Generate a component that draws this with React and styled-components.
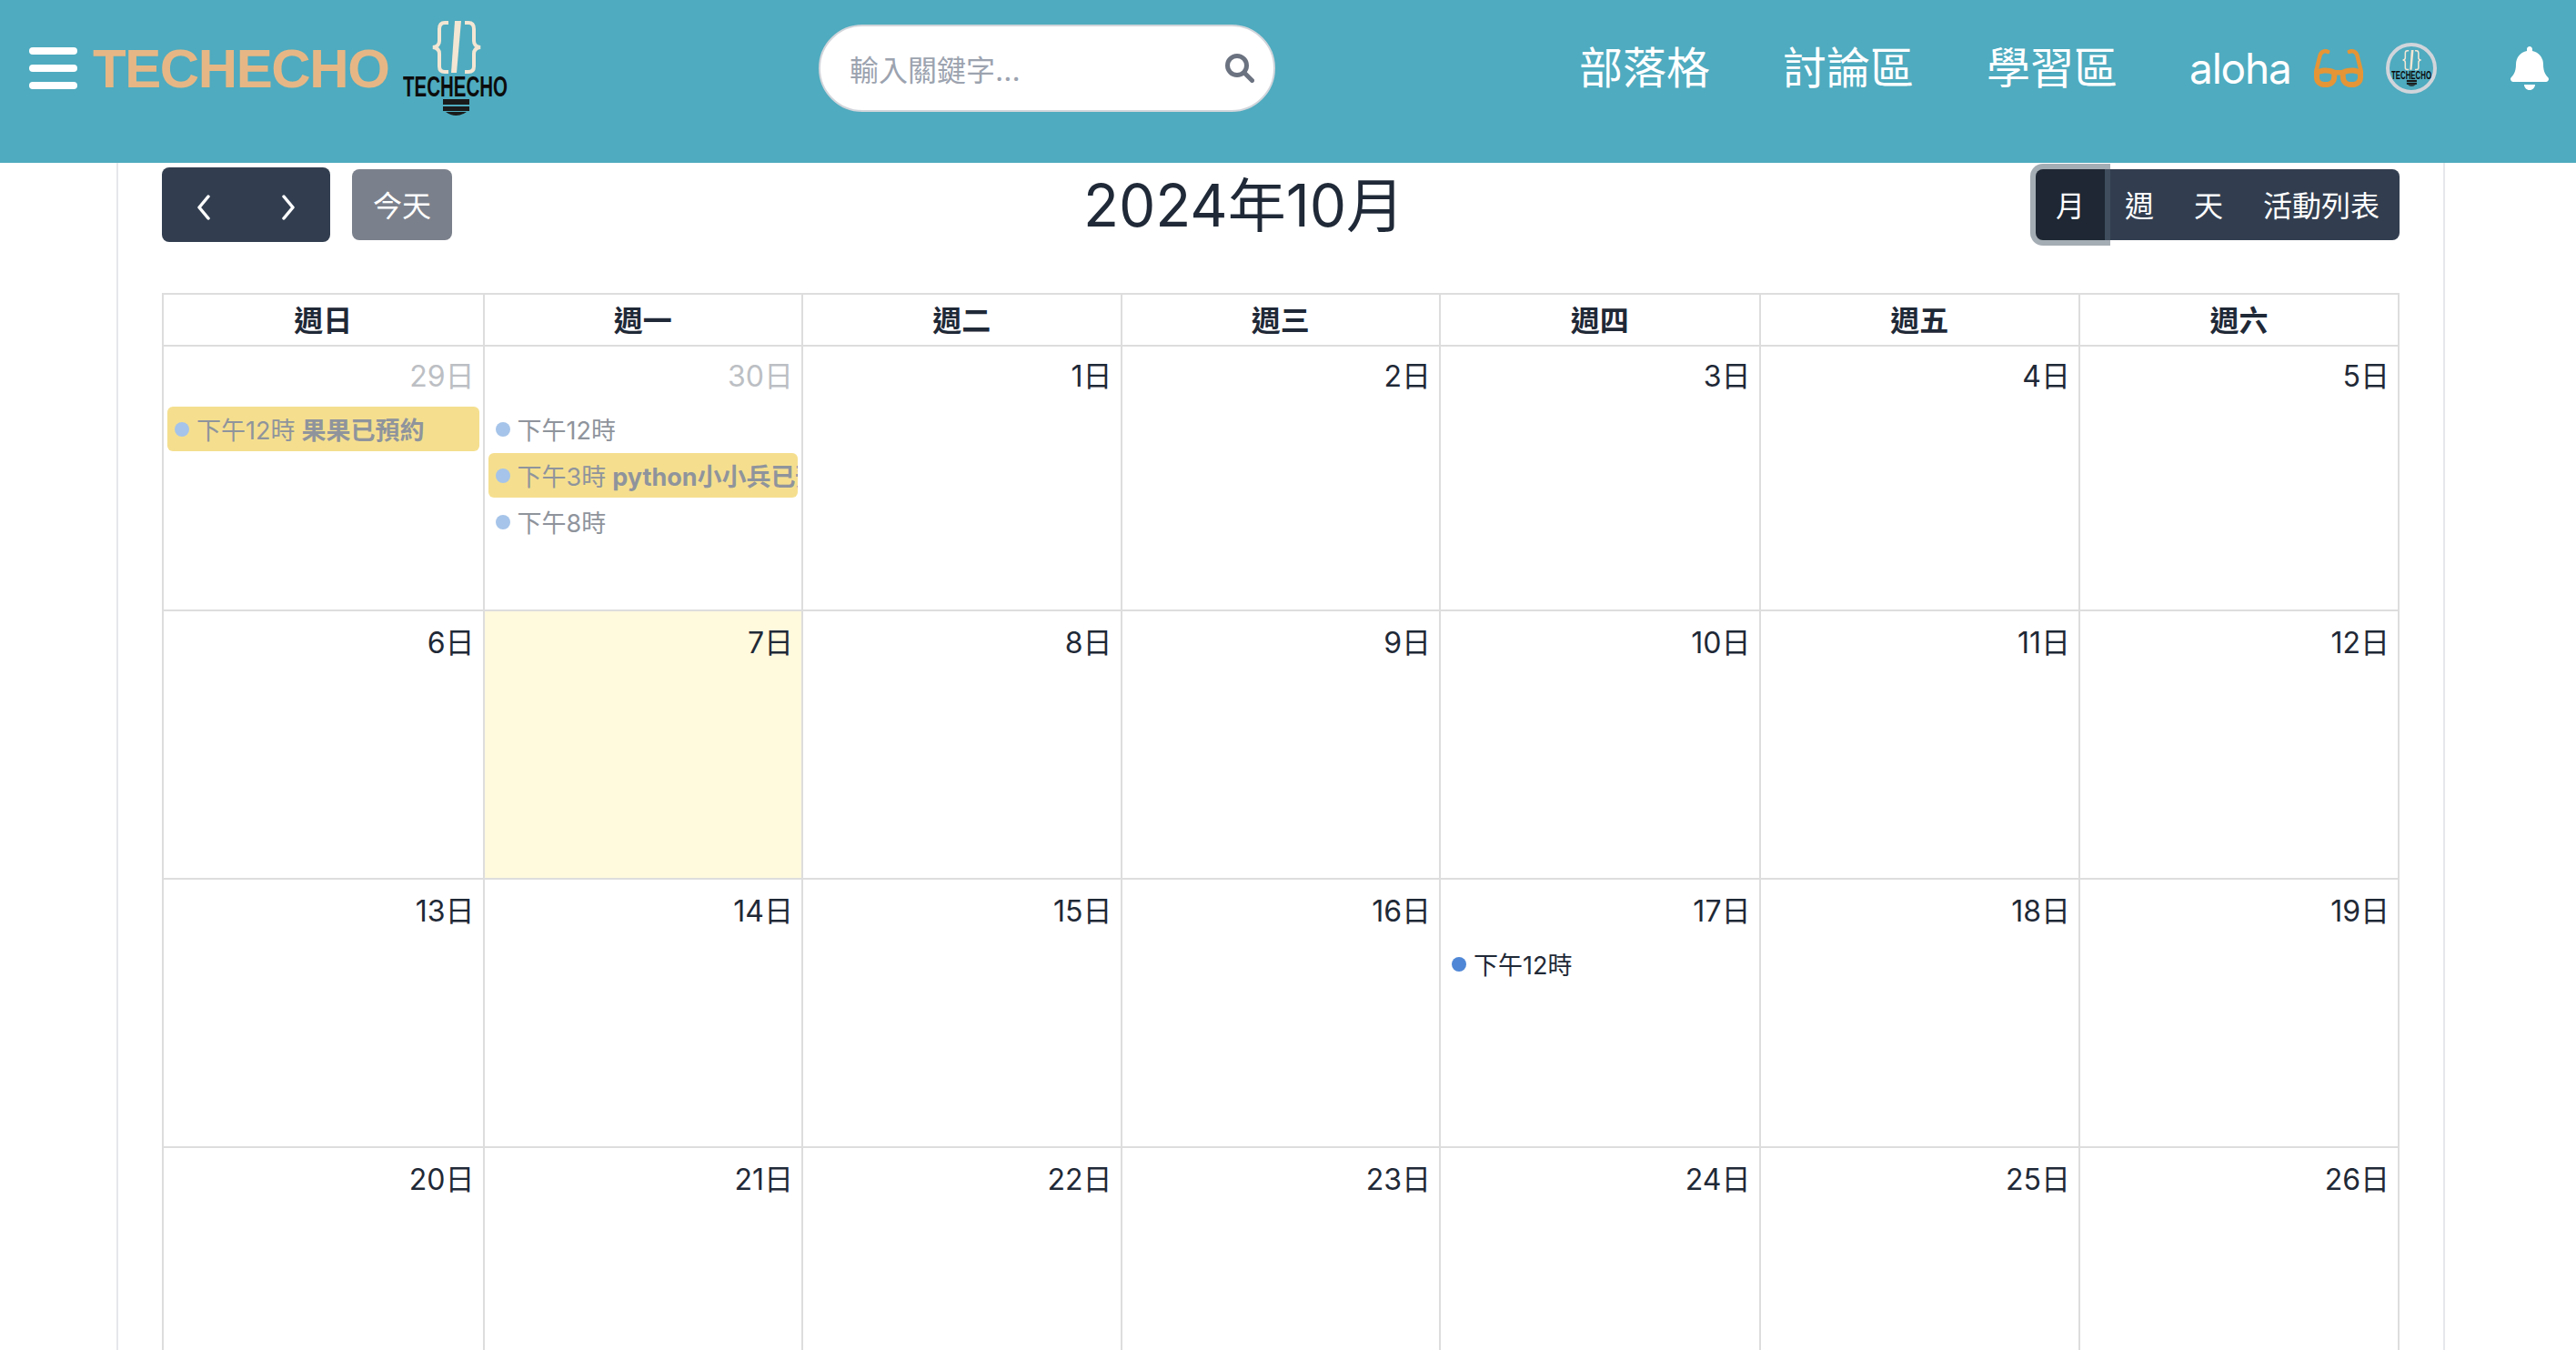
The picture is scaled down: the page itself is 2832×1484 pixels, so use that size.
import React from "react";
import styled, { createGlobalStyle } from "styled-components";
import { FaBell, FaGlasses } from "react-icons/fa";

const GlobalStyle = createGlobalStyle`
  html, body {
    margin: 0;
    padding: 0;
    height: 1484px;
    overflow: hidden;
    background: #fff;
    font-family: Inter, "Noto Sans CJK TC", sans-serif;
    color: #1f2937;
  }
`;

const weekdays = ["週日", "週一", "週二", "週三", "週四", "週五", "週六"];

// the cells of the calendar are not all equally wide in the picture
const columns = "352.5px 350.5px 350.5px 350.5px 351.5px 351.5px 351px";

const weeks = [
  {
    height: 291,
    head: 66,
    top: 11,
    days: [
      {
        label: "29日",
        other: true,
        events: [{ time: "下午12時", title: "果果已預約", booked: true }],
      },
      {
        label: "30日",
        other: true,
        events: [
          { time: "下午12時" },
          { time: "下午3時", title: "python小小兵已預約", booked: true },
          { time: "下午8時" },
        ],
      },
      { label: "1日" },
      { label: "2日" },
      { label: "3日" },
      { label: "4日" },
      { label: "5日" },
    ],
  },
  {
    height: 295,
    head: 68,
    top: 13,
    days: [
      { label: "6日" },
      { label: "7日", today: true },
      { label: "8日" },
      { label: "9日" },
      { label: "10日" },
      { label: "11日" },
      { label: "12日" },
    ],
  },
  {
    height: 295,
    head: 68,
    top: 13,
    days: [
      { label: "13日" },
      { label: "14日" },
      { label: "15日" },
      { label: "16日" },
      { label: "17日", events: [{ time: "下午12時" }] },
      { label: "18日" },
      { label: "19日" },
    ],
  },
  {
    height: 295,
    head: 68,
    top: 13,
    days: [
      { label: "20日" },
      { label: "21日" },
      { label: "22日" },
      { label: "23日" },
      { label: "24日" },
      { label: "25日" },
      { label: "26日" },
    ],
  },
];

const Logo = ({ width }) => (
  <LogoSvg width={width} viewBox="0 0 115 105">
    <g fill="none" stroke="#f3e6d3" strokeWidth="4">
      <path d="M50 2H46Q40 2 40 9V22Q40 28 33 29Q40 30 40 36V50Q40 56 46 56H50" />
      <path d="M68 2H72Q78 2 78 9V22Q78 28 85 29Q78 30 78 36V50Q78 56 72 56H68" />
    </g>
    <polygon points="57,0 64,0 59,57 53,57" fill="#f3e6d3" />
    <LogoText x="0" y="83" textLength="115" lengthAdjust="spacingAndGlyphs">
      TECHECHO
    </LogoText>
    <rect x="44" y="86" width="29" height="6" fill="#1a1a1a" />
    <rect x="44" y="94" width="29" height="5" fill="#1a1a1a" />
    <path d="M47 100H70Q58 108 47 100Z" fill="#1a1a1a" />
  </LogoSvg>
);

const Chevron = ({ d }) => (
  <ChevronSvg viewBox="0 0 16 28" fill="none" stroke="#fff" strokeWidth="3.5" strokeLinecap="round" strokeLinejoin="round">
    <path d={d} />
  </ChevronSvg>
);

const Event = ({ event, past }) => (
  <EventRow $booked={event.booked} $past={past}>
    <EventDot $past={past} />
    <span>{event.time}</span>
    {event.title && <EventTitle>{event.title}</EventTitle>}
  </EventRow>
);

const App = () => {
  return (
    <>
      <GlobalStyle />
      <Header>
        <MenuIcon viewBox="0 0 53 46">
          <rect y="0" width="53" height="8" rx="4" />
          <rect y="19" width="53" height="8" rx="4" />
          <rect y="38" width="53" height="8" rx="4" />
        </MenuIcon>
        <Brand>TECHECHO</Brand>
        <LogoSlot>
          <Logo width={115} />
        </LogoSlot>
        <SearchBox>
          <Placeholder>輸入關鍵字...</Placeholder>
          <SearchIcon viewBox="0 0 32 32" fill="none" stroke="#6b7280" strokeWidth="5">
            <circle cx="13" cy="13" r="10.5" />
            <path d="M21 21L29.5 29.5" strokeLinecap="round" />
          </SearchIcon>
        </SearchBox>
        <Nav>
          <NavLink>部落格</NavLink>
          <NavLink>討論區</NavLink>
          <NavLink>學習區</NavLink>
        </Nav>
        <User>
          <UserName>aloha</UserName>
          <FaGlasses size={54} color="#e59536" />
          <Avatar>
            <Logo width={44} />
          </Avatar>
        </User>
        <BellSlot>
          <FaBell size={48} color="#fff" />
        </BellSlot>
      </Header>

      <Container>
        <Toolbar>
          <LeftTools>
            <ArrowGroup>
              <ArrowButton>
                <Chevron d="M13 2L3 14L13 26" />
              </ArrowButton>
              <ArrowButton>
                <Chevron d="M3 2L13 14L3 26" />
              </ArrowButton>
            </ArrowGroup>
            <TodayButton>今天</TodayButton>
          </LeftTools>
          <Title>2024年10月</Title>
          <ViewGroup>
            <ViewButton $active>月</ViewButton>
            <ViewButton>週</ViewButton>
            <ViewButton>天</ViewButton>
            <ViewButton $last>活動列表</ViewButton>
          </ViewGroup>
        </Toolbar>

        <Calendar>
          <WeekHeader>
            {weekdays.map((name) => (
              <WeekdayCell key={name}>{name}</WeekdayCell>
            ))}
          </WeekHeader>
          {weeks.map((week) => (
            <WeekRow key={week.days[0].label} $height={week.height}>
              {week.days.map((day) => (
                <DayCell key={day.label} $today={day.today}>
                  <DayNumber $other={day.other} $head={week.head} $top={week.top}>
                    {day.label}
                  </DayNumber>
                  {(day.events || []).map((event) => (
                    <Event key={event.time} event={event} past={day.other} />
                  ))}
                </DayCell>
              ))}
            </WeekRow>
          ))}
        </Calendar>
      </Container>
    </>
  );
};

export default App;

const Header = styled.header`
  box-sizing: border-box;
  width: 100%;
  height: 179px;
  padding: 0 0 29px 32px;
  display: flex;
  align-items: center;
  background: #4fabbf;
`;

const MenuIcon = styled.svg`
  width: 53px;
  height: 46px;
  fill: #fff;
  flex-shrink: 0;
`;

const Brand = styled.div`
  margin-left: 17px;
  padding-top: 2px;
  width: 326px;
  font-family: "Liberation Sans", sans-serif;
  font-size: 60px;
  font-weight: 700;
  letter-spacing: -1.4px;
  line-height: 60px;
  color: #e6b785;
  white-space: nowrap;
`;

const LogoSlot = styled.div`
  margin-left: 15px;
  display: flex;
`;

const LogoSvg = styled.svg`
  display: block;
  flex-shrink: 0;
`;

const LogoText = styled.text`
  font-family: "Liberation Sans", sans-serif;
  font-size: 31px;
  font-weight: 700;
  fill: #0c0c0c;
`;

const SearchBox = styled.div`
  box-sizing: border-box;
  margin-left: 342px;
  width: 502px;
  height: 96px;
  padding: 0 21px 0 32px;
  display: flex;
  align-items: center;
  justify-content: space-between;
  background: #fff;
  border: 2px solid #d1d5db;
  border-radius: 48px;
`;

const Placeholder = styled.span`
  font-size: 32px;
  color: #9ca3af;
`;

const SearchIcon = styled.svg`
  width: 32px;
  height: 32px;
`;

const Nav = styled.nav`
  margin-left: 334px;
  display: flex;
  gap: 80px;
`;

const NavLink = styled.a`
  font-size: 48px;
  line-height: 60px;
  color: #fff;
`;

const User = styled.div`
  margin-left: 79px;
  display: flex;
  align-items: center;
  gap: 25px;
`;

const UserName = styled.span`
  font-size: 46px;
  letter-spacing: -1.2px;
  line-height: 60px;
  color: #fff;
`;

const Avatar = styled.div`
  box-sizing: border-box;
  width: 56px;
  height: 56px;
  display: flex;
  align-items: center;
  justify-content: center;
  border: 4px solid #d1d5db;
  border-radius: 50%;
`;

const BellSlot = styled.div`
  margin-left: 78px;
  display: flex;
`;

const Container = styled.main`
  box-sizing: border-box;
  width: 2560px;
  margin-left: 128px;
  padding: 5px 48px 0;
  border-left: 2px solid #e5e7eb;
  border-right: 2px solid #e5e7eb;
`;

const Toolbar = styled.div`
  height: 82px;
  margin-bottom: 56px;
  display: flex;
  align-items: center;
  justify-content: space-between;
`;

const LeftTools = styled.div`
  display: flex;
  align-items: center;
  gap: 24px;
`;

const ArrowGroup = styled.div`
  display: flex;
  height: 82px;
  border-radius: 8px;
  background: #323e50;
`;

const ArrowButton = styled.div`
  width: 92.5px;
  padding-top: 6px;
  box-sizing: border-box;
  display: flex;
  align-items: center;
  justify-content: center;
`;

const ChevronSvg = styled.svg`
  width: 16px;
  height: 28px;
`;

const TodayButton = styled.div`
  box-sizing: border-box;
  width: 110px;
  height: 78px;
  padding-bottom: 3px;
  display: flex;
  align-items: center;
  justify-content: center;
  font-size: 32px;
  color: #fff;
  background: #7b818c;
  border-radius: 8px;
`;

const Title = styled.h2`
  margin: 0;
  padding-top: 2px;
  font-size: 64px;
  font-weight: 400;
  line-height: 80px;
  color: #1f2937;
`;

const ViewGroup = styled.div`
  display: flex;
  height: 78px;
`;

const ViewButton = styled.div`
  position: relative;
  padding: 0 22px 3px;
  display: flex;
  align-items: center;
  font-size: 32px;
  color: #fff;
  background: ${(props) => (props.$active ? "#1e2733" : "#323e50")};
  border-radius: ${(props) =>
    props.$active ? "8px 0 0 8px" : props.$last ? "0 8px 8px 0" : "0"};
  box-shadow: ${(props) =>
    props.$active ? "0 0 0 6px rgba(76, 91, 106, 0.5)" : "none"};
  z-index: ${(props) => (props.$active ? 1 : 0)};
`;

const Calendar = styled.div`
  box-sizing: border-box;
  width: 2460px;
  border-top: 2px solid #ddd;
  border-left: 2px solid #ddd;
`;

const WeekHeader = styled.div`
  display: grid;
  grid-template-columns: ${columns};
`;

const WeekdayCell = styled.div`
  box-sizing: border-box;
  height: 57px;
  padding-bottom: 3px;
  display: flex;
  align-items: center;
  justify-content: center;
  font-size: 32px;
  font-weight: 700;
  color: #1f2937;
  border-right: 2px solid #ddd;
  border-bottom: 2px solid #ddd;
`;

const WeekRow = styled.div`
  display: grid;
  grid-template-columns: ${columns};
  height: ${(props) => props.$height}px;
`;

const DayCell = styled.div`
  box-sizing: border-box;
  min-width: 0;
  border-right: 2px solid #ddd;
  border-bottom: 2px solid #ddd;
  background: ${(props) => (props.$today ? "#fff9de" : "transparent")};
`;

const DayNumber = styled.div`
  box-sizing: border-box;
  height: ${(props) => props.$head}px;
  padding: ${(props) => props.$top}px 9px 0 0;
  text-align: right;
  font-size: 32px;
  line-height: 44px;
  color: ${(props) => (props.$other ? "#bcbfc4" : "#1f2937")};
`;

const EventRow = styled.div`
  box-sizing: border-box;
  height: 49px;
  margin: 0 4px 2px;
  padding-left: 8px;
  display: flex;
  align-items: center;
  font-size: 27px;
  white-space: nowrap;
  overflow: hidden;
  border-radius: 6px;
  color: ${(props) => (props.$past ? "#8f949c" : "#1f2937")};
  background: ${(props) => (props.$booked ? "#f5df8f" : "transparent")};
`;

const EventDot = styled.i`
  flex-shrink: 0;
  width: 16px;
  height: 16px;
  margin-right: 8px;
  border-radius: 50%;
  background: ${(props) => (props.$past ? "#a6c4e9" : "#4f87d6")};
`;

const EventTitle = styled.b`
  margin-left: 7px;
  font-weight: 700;
`;
